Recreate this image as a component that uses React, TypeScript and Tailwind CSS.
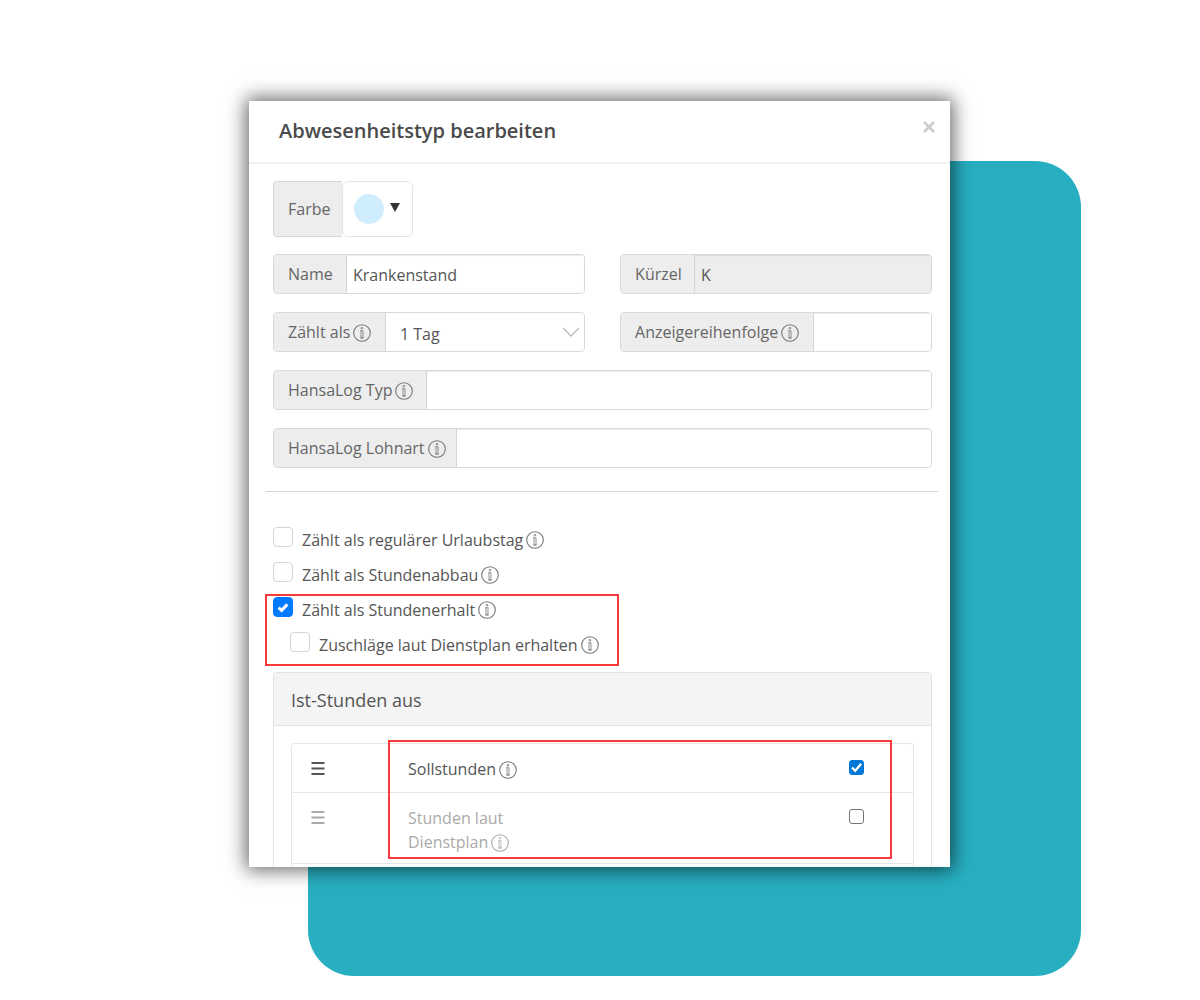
import * as React from "react";
import clsx from "clsx";

const InfoIcon: React.FC<{ className?: string }> = ({ className }) => (
  <svg
    viewBox="0 0 18 18"
    fill="none"
    stroke="currentColor"
    className={clsx("inline-block h-[18px] w-[18px] shrink-0", className)}
    aria-hidden="true"
  >
    <circle cx="9" cy="9" r="8.3" strokeWidth="1.1" />
    <circle cx="9" cy="4.2" r="0.8" strokeWidth="0.9" />
    <path d="M7.2 6.7h2.8v7.2H8V6.7M7.2 14h3.6" strokeWidth="0.8" />
  </svg>
);

const CheckMark: React.FC<{ d: string }> = ({ d }) => (
  <svg
    viewBox="0 0 20 20"
    fill="none"
    stroke="white"
    strokeWidth="3"
    className="pointer-events-none invisible col-start-1 row-start-1 h-full w-full peer-checked:visible"
    aria-hidden="true"
  >
    <path d={d} />
  </svg>
);

const groupClass =
  "flex h-10 overflow-hidden rounded border border-[#d9d9d9] bg-white focus-within:border-[#80bdff]";
const addonClass =
  "flex shrink-0 items-center gap-[3px] border-r border-[#d6d6d6] bg-[#ededed] pl-3.5 whitespace-nowrap text-[#666]";
const inputClass =
  "min-w-0 flex-1 bg-white px-1.5 pt-0.5 shadow-[inset_0_1px_1px_rgba(0,0,0,0.08)] outline-none read-only:bg-[#ededed]";

interface FieldProps {
  id: string;
  label: string;
  addonWidth: string;
  info?: boolean;
  value?: string;
  readOnly?: boolean;
  className?: string;
}

const Field: React.FC<FieldProps> = ({ id, label, addonWidth, info, value, readOnly, className }) => (
  <div className={clsx(groupClass, className)}>
    <label htmlFor={id} className={clsx(addonClass, addonWidth)}>
      {label}
      {info && <InfoIcon className="mt-0.5 text-[#777]" />}
    </label>
    <input id={id} type="text" defaultValue={value} readOnly={readOnly} className={inputClass} />
  </div>
);

interface OptionProps {
  id: string;
  label: string;
  checked?: boolean;
  className?: string;
}

const Option: React.FC<OptionProps> = ({ id, label, checked, className }) => (
  <div className={clsx("flex h-[35px] items-start", className)}>
    <span className="grid h-5 w-5 shrink-0">
      <input
        id={id}
        type="checkbox"
        defaultChecked={checked}
        className="peer col-start-1 row-start-1 h-5 w-5 appearance-none rounded border border-[#d4d4d4] bg-white checked:border-[#007bff] checked:bg-[#007bff]"
      />
      <CheckMark d="M5.6 10.6l3 2.8 5.8-6" />
    </span>
    <label htmlFor={id} className="flex items-center gap-[3px] pt-px pl-[9px] leading-6">
      {label}
      <InfoIcon className="text-[#777]" />
    </label>
  </div>
);

const sources = [
  { id: "target", lines: ["Sollstunden"], active: true },
  { id: "roster", lines: ["Stunden laut", "Dienstplan"], active: false },
];

export default function App() {
  return (
    <main className="min-h-screen bg-white pt-[101px] pr-[9.9%] pl-[20.75%] font-['Open_Sans','Noto_Sans',sans-serif] text-base leading-6 text-[#555]">
      <div className="grid">
        <div className="col-start-1 row-start-1 mt-[60px] ml-[59px] rounded-[46px] bg-[#27afc1]" />
        <section className="z-10 col-start-1 row-start-1 mr-[131px] mb-[109px] bg-white shadow-[0_0_18px_3px_rgba(0,0,0,0.6)]">
          <header className="flex h-[63px] items-start justify-between border-b-2 border-[#f1f1f1] pt-4 pr-3.5 pl-[30px]">
            <h1 className="text-xl leading-7 font-semibold text-[#4a4a4a]">
              Abwesenheitstyp bearbeiten
            </h1>
            <button type="button" aria-label="Schließen" className="mt-[3px] text-[#ccc]">
              <svg viewBox="0 0 14 14" className="h-3.5 w-3.5" stroke="currentColor" strokeWidth="2.6">
                <path d="M2 2l10 10M12 2L2 12" />
              </svg>
            </button>
          </header>

          <form className="pt-[17px] pr-[18px] pl-6">
            <div className="flex h-14">
              <label
                htmlFor="color"
                className="flex w-[69px] items-center rounded-l border border-r-0 border-[#d6d6d6] bg-[#ededed] pl-3.5 text-[#666]"
              >
                Farbe
              </label>
              <button
                id="color"
                type="button"
                className="flex w-[71px] items-center gap-1.5 rounded-md border border-[#e4e4e4] bg-white pl-[11px]"
              >
                <span className="h-[30px] w-[30px] rounded-full bg-[#d0edfd]" />
                <svg viewBox="0 0 10 9" className="mb-1 h-[9px] w-2.5" fill="#333">
                  <path d="M0 0h10L5 9z" />
                </svg>
              </button>
            </div>

            <div className="mt-[17px] grid grid-cols-2 gap-x-[35px] gap-y-[18px]">
              <Field id="name" label="Name" addonWidth="w-[73px]" value="Krankenstand" />
              <Field id="short" label="Kürzel" addonWidth="w-[74px]" value="K" readOnly />
              <div className={groupClass}>
                <label htmlFor="counts" className={clsx(addonClass, "w-[112px]")}>
                  Zählt als
                  <InfoIcon className="mt-0.5 text-[#777]" />
                </label>
                <div className="grid flex-1">
                  <select
                    id="counts"
                    className="col-start-1 row-start-1 appearance-none bg-white pt-1 pl-3.5 outline-none"
                  >
                    <option>1 Tag</option>
                  </select>
                  <svg
                    viewBox="0 0 18 10"
                    fill="none"
                    stroke="#bbb"
                    strokeWidth="1.3"
                    className="pointer-events-none col-start-1 row-start-1 mr-1 h-2.5 w-[18px] self-center justify-self-end"
                  >
                    <path d="M1 1l8 8 8-8" />
                  </svg>
                </div>
              </div>
              <Field id="order" label="Anzeigereihenfolge" addonWidth="w-[193px]" info />
              <Field id="type" label="HansaLog Typ" addonWidth="w-[153px]" info className="col-span-2" />
              <Field id="wage" label="HansaLog Lohnart" addonWidth="w-[183px]" info className="col-span-2" />
            </div>

            <hr className="mt-[23px] -mr-1.5 -ml-[7px] border-[#d4d4d4]" />

            <div className="mt-[35px]">
              <Option id="vacation" label="Zählt als regulärer Urlaubstag" />
              <Option id="reduction" label="Zählt als Stundenabbau" />
              <div className="relative">
                <Option id="credit" label="Zählt als Stundenerhalt" checked />
                <Option id="surcharge" label="Zuschläge laut Dienstplan erhalten" className="pl-[17px]" />
                <div className="pointer-events-none absolute -top-[3px] -left-2 h-[72px] w-[354px] border-2 border-[#f93a3a]" />
              </div>
            </div>

            <div className="mt-[5px] rounded-t border border-b-0 border-[#e3e3e3]">
              <h2 className="border-b border-[#e3e3e3] bg-[#f4f4f4] px-[17px] pt-3.5 pb-3 text-lg leading-[26px]">
                Ist-Stunden aus
              </h2>
              <div className="relative px-[17px] pt-[17px]">
                <div className="rounded-t border border-b-0 border-[#e6e6e6]">
                  <table className="w-full">
                    <tbody>
                      {sources.map((source) => (
                        <tr
                          key={source.id}
                          className={clsx("border-b border-[#e6e6e6] align-top", !source.active && "text-[#aaa]")}
                        >
                          <td className="w-[116px] pt-[18px] pl-[19px]">
                            <svg
                              viewBox="0 0 14 13"
                              stroke="currentColor"
                              strokeWidth="1.8"
                              className="h-[13px] w-3.5"
                            >
                              <path d="M0.5 1h13M0.5 6.5h13M0.5 12h13" />
                            </svg>
                          </td>
                          <td className={source.active ? "pt-[13px] pb-[11px]" : "pt-[13px] pb-[9px]"}>
                            <label htmlFor={source.id}>
                              {source.lines.map((line, i) => (
                                <span key={line} className="flex items-center gap-[3px]">
                                  {line}
                                  {i === source.lines.length - 1 && (
                                    <InfoIcon className={clsx("mt-0.5", source.active && "text-[#777]")} />
                                  )}
                                </span>
                              ))}
                            </label>
                          </td>
                          <td className="w-[64px] pt-4">
                            <span className="grid h-[15px] w-[15px]">
                              <input
                                id={source.id}
                                type="checkbox"
                                defaultChecked={source.active}
                                className="peer col-start-1 row-start-1 h-[15px] w-[15px] appearance-none rounded-[3px] border border-[#767676] bg-white checked:border-[#0078d7] checked:bg-[#0078d7]"
                              />
                              <CheckMark d="M4 10.2l4.4 4.2 7.8-9.4" />
                            </span>
                          </td>
                        </tr>
                      ))}
                    </tbody>
                  </table>
                  <div className="h-[3px]" />
                </div>
                <div className="pointer-events-none absolute top-3.5 right-[39px] left-[114px] h-[119px] border-2 border-[#f93a3a]" />
              </div>
            </div>
          </form>
        </section>
      </div>
    </main>
  );
}
